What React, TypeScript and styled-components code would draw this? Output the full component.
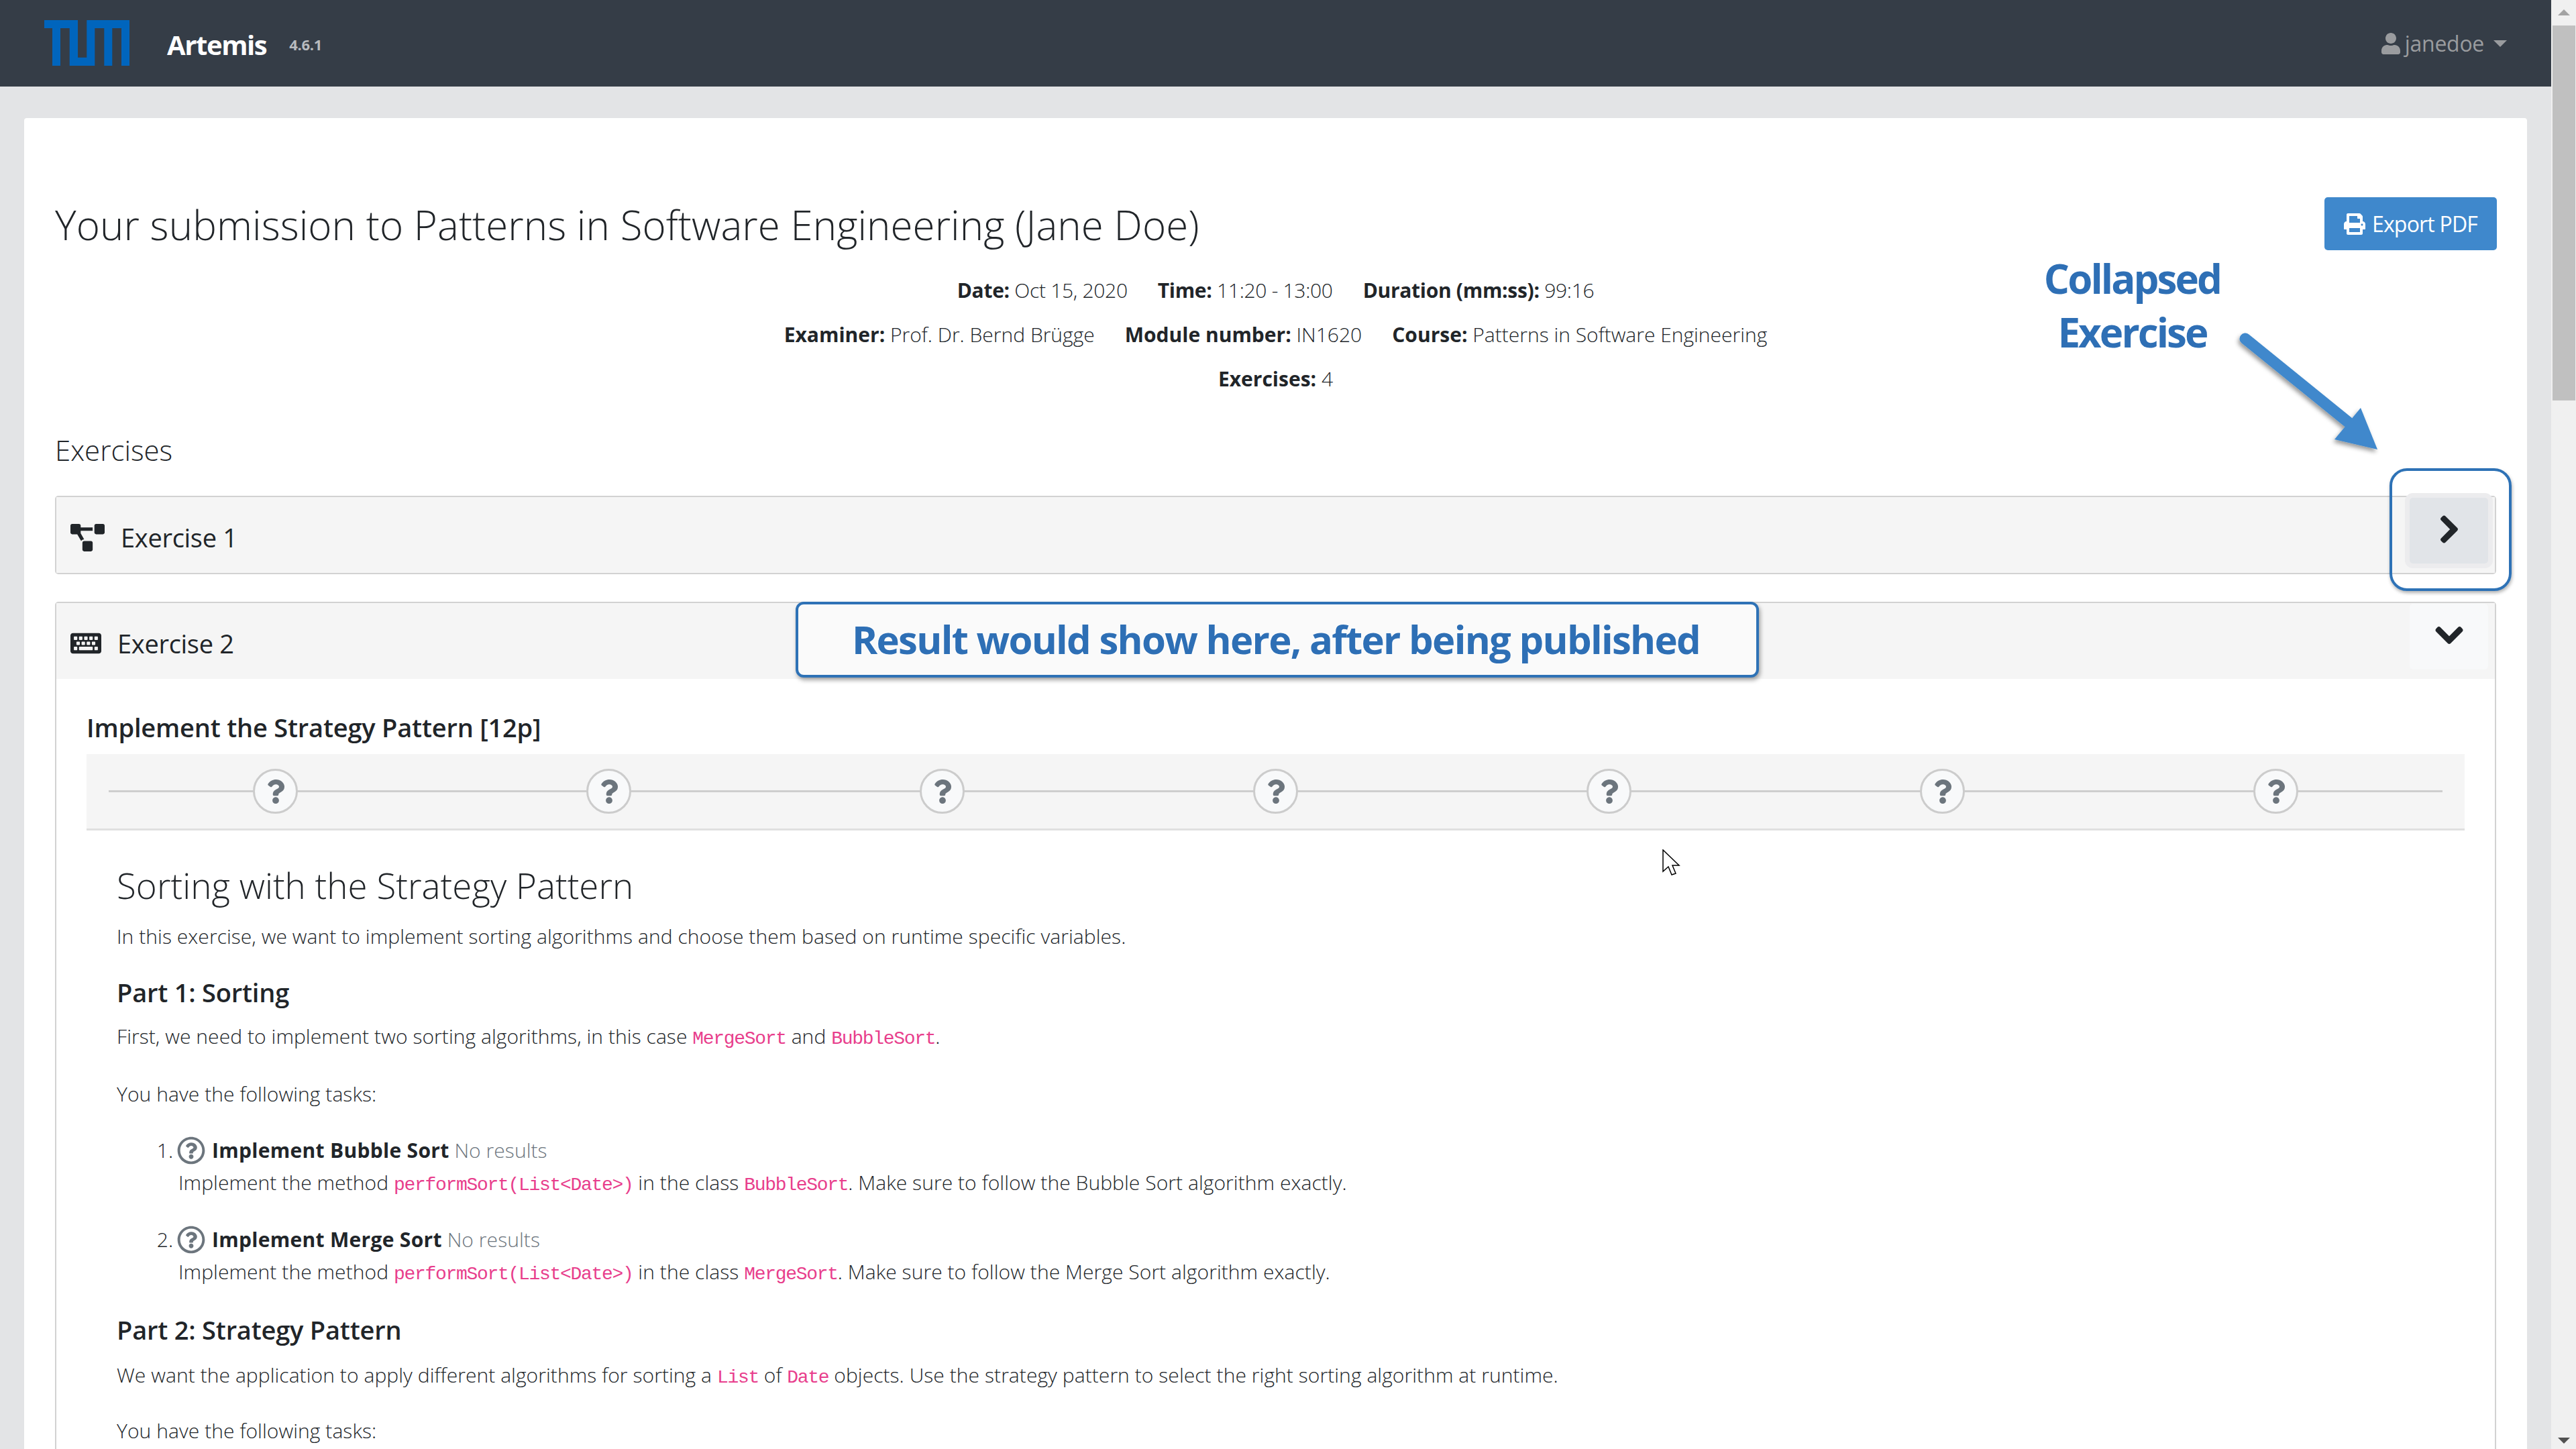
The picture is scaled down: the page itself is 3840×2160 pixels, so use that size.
import React from 'react';
import styled, { createGlobalStyle } from 'styled-components';
import { FaUser, FaPrint, FaChevronRight, FaChevronDown, FaProjectDiagram, FaKeyboard, FaQuestion, FaRegQuestionCircle } from 'react-icons/fa';

const Global = createGlobalStyle`
  html, body { margin: 0; padding: 0; overflow: hidden; background: #e3e4e6; }
  body { font-family: "Open Sans", "Noto Sans", sans-serif; font-weight: 300; color: #212529; font-size: 30px; }
  * { box-sizing: border-box; }
`;

const Root = styled.div`position: relative; width: 3840px; height: 2160px; overflow: hidden; display: flex;`;
const Main = styled.div`flex: 1; min-width: 0; height: 2160px; display: flex; flex-direction: column; background: #e3e4e6;`;
const Navbar = styled.header`height: 129px; flex: none; background: #353d47; display: flex; align-items: center; padding: 0 66px; color: #fff;`;
const Logo = styled.svg`width: 127px; height: 68px; display: block; margin-top: -1px;`;
const Brand = styled.span`margin: 3px 0 0 56px; font-size: 40px; font-weight: 700; letter-spacing: -1.4px;`;
const Version = styled.span`margin: 3px 0 0 34px; font-size: 22px; font-weight: 700; color: #b8bbbf; letter-spacing: -.3px;`;
const UserMenu = styled.div`margin-left: auto; display: flex; align-items: center; color: #9a9c9f; font-size: 32px; font-weight: 400; letter-spacing: -.3px; svg { width: 30px; height: 32px; margin-right: 6px; }`;
const Caret = styled.span`margin-left: 14px; width: 0; height: 0; border-left: 10px solid transparent; border-right: 10px solid transparent; border-top: 10px solid #9a9c9f;`;

const Content = styled.main`flex: 1; min-height: 0; padding: 47px 36px 0; display: flex;`;
const Card = styled.section`flex: 1; min-width: 0; min-height: 2300px; background: #fff; border-radius: 4px 4px 0 0; padding: 118px 46px 0; display: flex; flex-direction: column;`;
const TitleRow = styled.div`display: flex; justify-content: space-between; align-items: center;`;
const Title = styled.h1`margin: 4px 0 0; font-size: 60px; font-weight: 300; line-height: 75px; letter-spacing: .08px;`;
const ExportButton = styled.button`width: 257px; height: 79px; margin-right: -1px; background: #3f88cc; color: #fff; border: 0; border-radius: 5px; font: 400 32px "Open Sans", sans-serif; letter-spacing: -.8px; display: flex; align-items: center; justify-content: center; gap: 10px; svg { width: 32px; height: 32px; }`;
const Info = styled.div`margin-top: 27px;`;
const InfoRow = styled.div<{ $tight?: boolean }>`display: flex; justify-content: center; gap: 45px; height: 66px; line-height: 66px; letter-spacing: ${p => (p.$tight ? '-.3px' : '0')};`;
const Key = styled.b`font-weight: 700;`;
const SectionTitle = styled.h2`margin: 43px 0 38px; font-size: 42px; font-weight: 300; line-height: 60px;`;
const Exercise = styled.article<{ $grow?: boolean; $gap?: boolean }>`border: 2px solid #d2d2d2; border-radius: 5px; background: #fff; margin-bottom: ${p => (p.$gap ? '41px' : '0')}; ${p => (p.$grow ? 'flex: 1;' : '')}`;
const ExerciseHead = styled.div`height: 113px; background: #f5f5f5; display: flex; align-items: center; padding: 0 10px 0 21px; > svg { margin-top: 7px; }`;
const ExerciseName = styled.span`font-size: 38px; font-weight: 400; letter-spacing: -.3px; margin-left: 24px; margin-top: 6px;`;
const Toggle = styled.div<{ $active?: boolean }>`margin-left: auto; width: 117px; height: 98px; display: flex; align-items: center; justify-content: center; border-radius: 5px; background: ${p => (p.$active ? '#e1e4e8' : '#f8f9fa')}; box-shadow: ${p => (p.$active ? '0 0 0 7px #ececee' : 'none')}; align-self: flex-start; margin-top: 1px; svg { width: 46px; height: 46px; margin-bottom: 4px; stroke: currentColor; stroke-width: 20; }`;
const ExerciseBody = styled.div`padding: 47px 45px 0;`;
const TaskTitle = styled.h3`margin: 0 0 15px; font-size: 38px; line-height: 50px; font-weight: 600; letter-spacing: -.2px;`;
const Stepper = styled.div`position: relative; height: 114px; background: #f5f5f5; border-bottom: 3px solid #e0e0e0; padding: 22px 33px 0; display: flex; justify-content: space-around; align-items: flex-start;
  &::before { content: ''; position: absolute; left: 33px; right: 33px; top: 54px; height: 3px; background: #cecece; }`;
const Step = styled.div`position: relative; width: 67px; height: 67px; border-radius: 50%; background: #f8f9fa; border: 3px solid #cccccc; color: #6c757d; display: flex; align-items: center; justify-content: center; svg { width: 30px; height: 36px; }`;
const Markdown = styled.div`padding: 47px 0 0 45px; letter-spacing: .06px;`;
const MdTitle = styled.h2`margin: 0 0 20px; font-size: 52.8px; font-weight: 300; line-height: 70px;`;
const P = styled.p<{ $top?: number }>`margin: ${p => p.$top ?? 0}px 0 0; line-height: 42px;`;
const H3 = styled.h3<{ $top: number; $bottom: number }>`margin: ${p => p.$top}px 0 ${p => p.$bottom}px; font-size: 38px; line-height: 50px; font-weight: 600; letter-spacing: -.2px;`;
const Code = styled.code`font-family: "Liberation Mono", monospace; font-weight: 400; font-size: 28px; color: #e83e8c; letter-spacing: -1.3px;`;
const Tasks = styled.ol`margin: 39px 0 0; padding: 0 0 0 92px;`;
const Task = styled.li`margin-bottom: 33px; line-height: 48px;`;
const TaskHead = styled.div`height: 48px; svg { width: 42px; height: 42px; color: #6c757d; vertical-align: -10px; margin: 0 10px 0 -2px; }`;
const Grey = styled.span`color: #6c757d;`;
const Strong = styled.b`font-weight: 700; letter-spacing: .3px;`;

const Scrollbar = styled.aside`width: 37px; flex: none; height: 2160px; background: #f0f0f0; display: flex; flex-direction: column; align-items: center; padding-top: 14px;`;
const ArrowUp = styled.span`width: 0; height: 0; border-left: 9px solid transparent; border-right: 9px solid transparent; border-bottom: 9px solid #a3a3a3;`;
const Thumb = styled.div`width: 34px; height: 559px; margin-top: 15px; background: #c0c0c0;`;
const ArrowDown = styled.span`margin-top: auto; margin-bottom: 8px; width: 0; height: 0; border-left: 9px solid transparent; border-right: 9px solid transparent; border-top: 9px solid #505050;`;

const Overlay = styled.svg`position: absolute; left: 0; top: 0; width: 3840px; height: 2160px; pointer-events: none;`;
const Callout = styled.div`position: absolute; left: 2950px; top: 375px; width: 457px; text-align: center; font: 700 60px/80px "Open Sans", sans-serif; letter-spacing: -2.9px; color: #2e6fb5;`;
const ResultBox = styled.div`position: absolute; left: 1186px; top: 897px; width: 1436px; height: 113px; background: #fafafa; border: 4px solid #2e72b6; border-radius: 12px; box-shadow: 2px 4px 6px rgba(0,0,0,.35); display: flex; align-items: center; justify-content: center; font: 700 58px "Open Sans", sans-serif; letter-spacing: -1.7px; color: #2e6fb5; padding: 0 4px 3px 0; text-shadow: 0 0 4px #fff;`;
const Highlight = styled.div`position: absolute; left: 3562px; top: 698px; width: 182px; height: 183px; border: 4px solid #2e72b6; border-radius: 26px; box-shadow: 1px 3px 5px rgba(0,0,0,.3);`;
const Cursor = styled.svg`position: absolute; left: 2478px; top: 1266px; width: 28px; height: 40px;`;

export default function App() {
  const steps = [0, 1, 2, 3, 4, 5, 6];
  const method = <Code>performSort(List&lt;Date&gt;)</Code>;
  return (
    <Root>
      <Global />
      <Main>
        <Navbar>
          <Logo viewBox="0 0 127 68"><path fill="#0065bd" d="M0 0H50V55.7H63.3V0H127V68H115V12H101.3V68H89.3V12H75.3V68H37.7V12H24V68H12V12H0Z" /></Logo>
          <Brand>Artemis</Brand>
          <Version>4.6.1</Version>
          <UserMenu><FaUser />janedoe<Caret /></UserMenu>
        </Navbar>
        <Content>
          <Card>
            <TitleRow>
              <Title>Your submission to Patterns in Software Engineering (Jane Doe)</Title>
              <ExportButton><FaPrint />Export PDF</ExportButton>
            </TitleRow>
            <Info>
              <InfoRow $tight><span><Key>Date:</Key> Oct 15, 2020</span><span><Key>Time:</Key> 11:20 - 13:00</span><span><Key>Duration (mm:ss):</Key> 99:16</span></InfoRow>
              <InfoRow><span><Key>Examiner:</Key> Prof. Dr. Bernd Brügge</span><span><Key>Module number:</Key> IN1620</span><span><Key>Course:</Key> Patterns in Software Engineering</span></InfoRow>
              <InfoRow><span><Key>Exercises:</Key> 4</span></InfoRow>
            </Info>
            <SectionTitle>Exercises</SectionTitle>
            <Exercise $gap>
              <ExerciseHead>
                <FaProjectDiagram size={51} />
                <ExerciseName>Exercise 1</ExerciseName>
                <Toggle $active><FaChevronRight /></Toggle>
              </ExerciseHead>
            </Exercise>
            <Exercise $grow>
              <ExerciseHead>
                <FaKeyboard size={46} />
                <ExerciseName>Exercise 2</ExerciseName>
                <Toggle><FaChevronDown /></Toggle>
              </ExerciseHead>
              <ExerciseBody>
                <TaskTitle>Implement the Strategy Pattern [12p]</TaskTitle>
                <Stepper>{steps.map(s => <Step key={s}><FaQuestion /></Step>)}</Stepper>
                <Markdown>
                  <MdTitle>Sorting with the Strategy Pattern</MdTitle>
                  <P>In this exercise, we want to implement sorting algorithms and choose them based on runtime specific variables.</P>
                  <H3 $top={37} $bottom={20}>Part 1: Sorting</H3>
                  <P>First, we need to implement two sorting algorithms, in this case <Code>MergeSort</Code> and <Code>BubbleSort</Code>.</P>
                  <P $top={40}>You have the following tasks:</P>
                  <Tasks>
                    <Task>
                      <TaskHead><FaRegQuestionCircle /><Strong>Implement Bubble Sort</Strong> <Grey>No results</Grey></TaskHead>
                      Implement the method {method} in the class <Code>BubbleSort</Code>. Make sure to follow the Bubble Sort algorithm exactly.
                    </Task>
                    <Task>
                      <TaskHead><FaRegQuestionCircle /><Strong>Implement Merge Sort</Strong> <Grey>No results</Grey></TaskHead>
                      Implement the method {method} in the class <Code>MergeSort</Code>. Make sure to follow the Merge Sort algorithm exactly.
                    </Task>
                  </Tasks>
                  <H3 $top={31} $bottom={22}>Part 2: Strategy Pattern</H3>
                  <P>We want the application to apply different algorithms for sorting a <Code>List</Code> of <Code>Date</Code> objects. Use the strategy pattern to select the right sorting algorithm at runtime.</P>
                  <P $top={37}>You have the following tasks:</P>
                </Markdown>
              </ExerciseBody>
            </Exercise>
          </Card>
        </Content>
      </Main>
      <Scrollbar><ArrowUp /><Thumb /><ArrowDown /></Scrollbar>
      <Callout>Collapsed<br />Exercise</Callout>
      <Overlay viewBox="0 0 3840 2160">
        <defs><filter id="s" x="-20%" y="-20%" width="140%" height="140%"><feDropShadow dx="-2" dy="4" stdDeviation="3" floodColor="#000" floodOpacity=".4" /></filter></defs>
        <g filter="url(#s)">
          <path d="M3347 505L3500 629" stroke="#3f88cc" strokeWidth="17" strokeLinecap="round" fill="none" />
          <path d="M3519 608L3544 670L3480 655Z" fill="#3f88cc" />
        </g>
      </Overlay>
      <ResultBox>Result would show here, after being published</ResultBox>
      <Highlight />
      <Cursor viewBox="0 0 28 40"><path d="M1 1V33L9 26L14 38L20 36L15 24H25Z" fill="#fff" stroke="#000" strokeWidth="1.5" /></Cursor>
    </Root>
  );
}
